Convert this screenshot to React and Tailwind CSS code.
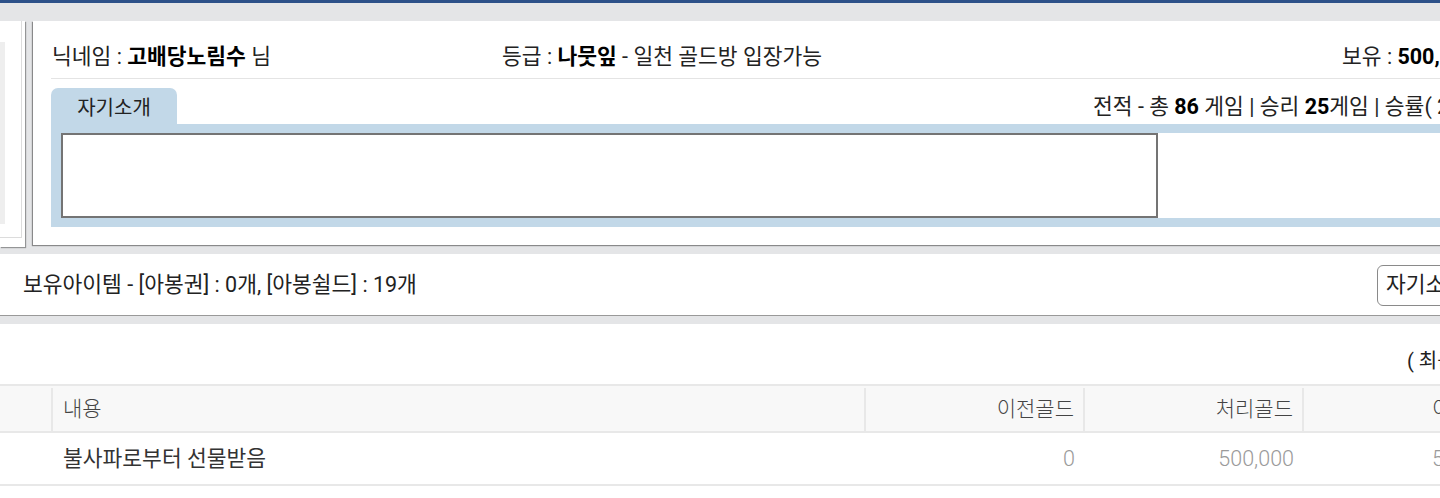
const FONT = "font-['Roboto','Noto_Sans_CJK_KR',sans-serif]";

const InfoRow = () => (
  <div className="flex items-center h-[58px] border-b border-[#e4e4e4] pt-[15px] text-[21.5px] text-[#222] whitespace-nowrap">
    <div className="w-[451px] shrink-0 pl-[1px]">
      닉네임 : <b className="font-bold text-black">고배당노림수</b> 님
    </div>
    <div className="w-[840px] shrink-0">
      등급 : <b className="font-bold text-black">나뭇잎</b> - 일천 골드방 입장가능
    </div>
    <div className="shrink-0">
      보유 : <b className="font-bold text-black">500,000</b> 골드
    </div>
  </div>
);

const IntroBox = () => (
  <div>
    <div className="flex items-end h-[45px]">
      <div className="w-[126px] shrink-0 h-[36px] bg-[#c2d8e8] rounded-t-[7px] flex items-center justify-center pt-[4px] text-[20px] text-[#222]">
        자기소개
      </div>
      <div className="ml-[916px] shrink-0 pb-[1px] text-[21.5px] text-[#222] whitespace-nowrap">
        전적 - 총 <b className="font-bold text-black">86</b> 게임 | 승리{" "}
        <b className="font-bold text-black">25</b>게임 | 승률( 29% )
      </div>
    </div>
    <div className="bg-[#c2d8e8] pt-[9px] pl-[10px] pb-[9px]">
      <div className="bg-white h-[85px] flex">
        <div className="w-[1097px] h-[85px] border-2 border-[#747474] bg-white" />
      </div>
    </div>
  </div>
);

export default function App() {
  return (
    <div className={`w-[1440px] h-[498px] overflow-hidden bg-white ${FONT}`}>
      <div className="h-[3px] bg-[#2d5189]" />

      <div className="bg-[#e4e5e7] pt-[18px] pb-[7px] overflow-hidden">
        <div className="flex gap-[8px] w-[1800px]">
          <div className="w-[25px] h-[226px] bg-white shadow-[1px_1px_1px_rgba(0,0,0,0.35)] shrink-0">
            <div className="w-[22px] h-[217px] border-r border-b border-[#dcdcdc] pt-[21px]">
              <div className="w-[5px] h-[182px] bg-[#eeeeee]" />
            </div>
          </div>
          <div className="w-[1700px] h-[224px] bg-white shadow-[-1px_1px_1px_rgba(0,0,0,0.4)] pl-[18px] shrink-0">
            <InfoRow />
            <IntroBox />
          </div>
        </div>
      </div>

      <div className="bg-white h-[61px] shadow-[0_1px_1px_rgba(0,0,0,0.4)] overflow-hidden">
        <div className="flex items-center h-full w-[1700px] pt-[1px]">
          <div className="w-[1377px] shrink-0 pl-[23px] text-[21.5px] text-[#222] whitespace-nowrap">
            보유아이템 - [아봉권] : 0개, [아봉쉴드] : 19개
          </div>
          <button className="h-[41px] w-[170px] shrink-0 border border-[#8a8a8a] rounded-[6px] bg-white text-[21.5px] text-[#222] text-left pl-[8px] whitespace-nowrap">
            자기소개 수정
          </button>
        </div>
      </div>

      <div className="h-[8px] bg-[#e4e5e7] mt-[1px]" />

      <div className="bg-white overflow-hidden">
        <div className="h-[60px] flex items-center pl-[1407px] pt-[14px] text-[20px] text-[#222] whitespace-nowrap w-[1700px]">
          ( 최근 30일 )
        </div>
        <div className="w-[1700px]">
          <div className="flex h-[49px] bg-[#f8f8f8] border-t-2 border-b-2 border-[#e8e8e8] pt-[2px] text-[21px] font-light text-[#444]">
            <div className="w-[53px] shrink-0 border-r-2 border-[#e8e8e8]" />
            <div className="w-[813px] shrink-0 border-r-2 border-[#e8e8e8] flex items-center pl-[10px]">내용</div>
            <div className="w-[219px] shrink-0 border-r-2 border-[#e8e8e8] flex items-center justify-end pr-[9px]">이전골드</div>
            <div className="w-[219px] shrink-0 border-r-2 border-[#e8e8e8] flex items-center justify-end pr-[9px]">처리골드</div>
            <div className="w-[219px] shrink-0 border-r-2 border-[#e8e8e8] flex items-center pl-[128px]">이후골드</div>
          </div>
          <div className="flex h-[53px] border-b-2 border-[#e8e8e8] pt-[1px] text-[21.5px]">
            <div className="w-[53px] shrink-0" />
            <div className="w-[813px] shrink-0 flex items-center pl-[10px] text-[#333]">불사파로부터 선물받음</div>
            <div className="w-[219px] shrink-0 flex items-center justify-end pr-[10px] font-light text-[#9a9a9a]">0</div>
            <div className="w-[219px] shrink-0 flex items-center justify-end pr-[10px] font-light text-[#9a9a9a]">500,000</div>
            <div className="w-[219px] shrink-0 flex items-center pl-[128px] font-light text-[#9a9a9a]">500,000</div>
          </div>
        </div>
      </div>
    </div>
  );
}
